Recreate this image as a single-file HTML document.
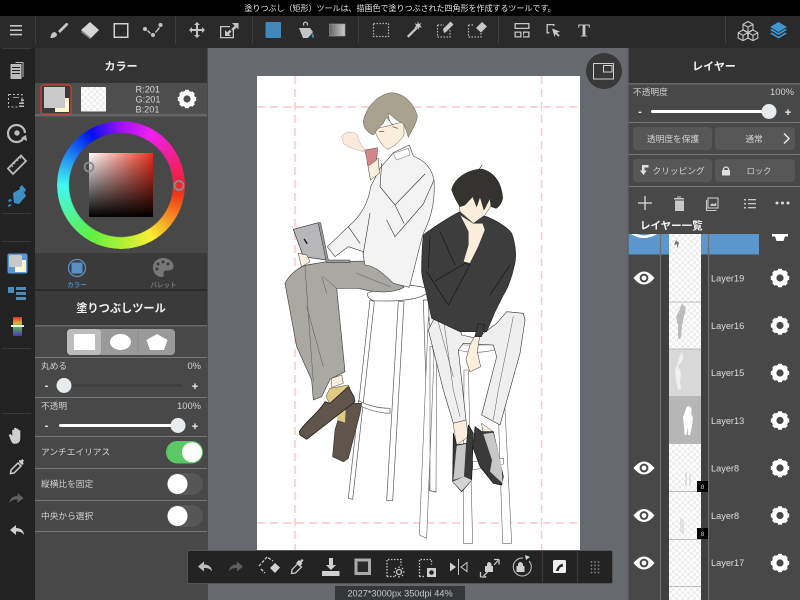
<!DOCTYPE html>
<html lang="ja"><head><meta charset="utf-8"><title>Paint</title>
<style>
html,body{margin:0;padding:0;width:800px;height:600px;overflow:hidden;background:#66696e}
svg{position:absolute;left:0;top:0;display:block}
text{font-family:"Liberation Sans","Noto Sans CJK JP",sans-serif;fill:#d2d2d2;font-size:8.7px}
.h{font-size:11px;font-weight:700;fill:#f0f0f0;text-anchor:middle}
.r{text-anchor:end;font-size:9.4px}.m{text-anchor:middle}
.l{font-size:9.2px;fill:#ddd}
.s{font-size:11px;font-weight:700;fill:#eee;text-anchor:middle}
.c{font-size:9.2px}
#wheel{position:absolute;left:57px;top:121px;width:128px;height:128px;border-radius:50%;
background:conic-gradient(from 0deg,#a010f5,#f020f0 30deg,#f02040 85deg,#f03818 100deg,#f8f030 150deg,#60f040 210deg,#40f8f0 270deg,#0010f0 330deg,#a010f5);
-webkit-mask:radial-gradient(circle,transparent 51.5px,#000 52.5px);mask:radial-gradient(circle,transparent 51.5px,#000 52.5px)}
#sv{position:absolute;left:89px;top:153px;width:64px;height:64px;background:linear-gradient(to bottom,rgba(0,0,0,0),#000),linear-gradient(to right,#fff,#e8301c)}
</style></head><body>
<svg width="800" height="600" viewBox="0 0 800 600" xmlns="http://www.w3.org/2000/svg">
<defs>
<pattern id="ck" width="6" height="6" patternUnits="userSpaceOnUse"><rect width="6" height="6" fill="#fff"/><rect width="3" height="3" fill="#eee"/><rect x="3" y="3" width="3" height="3" fill="#eee"/></pattern>
<g id="gear"><circle r="5.900" fill="none" stroke="#fff" stroke-width="4.600"/><g fill="#fff"><rect x="-2" y="-9.200" width="4" height="4"/><rect x="-2" y="-9.200" width="4" height="4" transform="rotate(45)"/><rect x="-2" y="-9.200" width="4" height="4" transform="rotate(90)"/><rect x="-2" y="-9.200" width="4" height="4" transform="rotate(135)"/><rect x="-2" y="-9.200" width="4" height="4" transform="rotate(180)"/><rect x="-2" y="-9.200" width="4" height="4" transform="rotate(225)"/><rect x="-2" y="-9.200" width="4" height="4" transform="rotate(270)"/><rect x="-2" y="-9.200" width="4" height="4" transform="rotate(315)"/></g></g>
<g id="eye"><path d="M-10.500 0Q0-13 10.500 0 0 13-10.500 0Z" fill="#fff"/><circle r="4.400" fill="#484848"/><circle r="2.400" fill="#fff"/></g>
<path id="undo" d="M-7 0L-1-5V-2C4-2 7 1 7 5 5 2 3 1.500-1 1.500V5Z"/>
</defs>

<rect width="800" height="600" fill="#66696e"/>
<rect x="0" y="0" width="800" height="16" fill="#000"/>
<rect x="0" y="16" width="800" height="32" fill="#2a2a2a"/>
<rect x="0" y="48" width="35" height="552" fill="#222"/>

<rect x="257" y="76" width="323" height="480" fill="#fff"/>
<g stroke="#fcc9c9" stroke-width="1.500" stroke-dasharray="8 5" fill="none">
<path d="M295 76V550M541.500 76V550M257 107H580M257 523H580"/>
</g>

<!-- figure 1 -->
<g transform="translate(280 80) scale(.33333)" stroke-linejoin="round" stroke-linecap="round">
<g fill="#fff" stroke="#555" stroke-width="2">
<path d="M270 660L205 1255 218 1258 283 665ZM355 665L320 1262 338 1262 372 665ZM430 660L448 1232 468 1236 445 660Z"/>
<path d="M235 962Q280 985 330 985V1000Q280 998 235 975Z"/>
<path d="M262 640Q350 600 442 625V640Q400 668 280 662 262 655 262 640Z"/>
</g>
<path d="M15 610C30 580 60 560 80 555L140 545 285 543C320 560 350 600 372 622 340 640 290 640 235 625L170 625 195 875 150 898 125 950 100 960 95 900 50 800Z" fill="#a9a8a3" stroke="#444" stroke-width="2"/>
<path d="M75 560L92 800 100 905M130 590L170 625M80 680L130 860M125 590L140 640M230 580L330 620" fill="none" stroke="#555" stroke-width="1.500"/>
<path d="M155 895L185 885 190 910 155 922Z" fill="#fbefdc" stroke="#444" stroke-width="1.500"/>
<path d="M190 970H245L240 1000 205 1135 190 1145 158 1130 165 1050Z" fill="#5f554a" stroke="#333" stroke-width="2"/>
<path d="M170 995L197 990 195 1028 172 1020Z" fill="#e0cb85"/>
<path d="M150 925L205 915 210 925 150 972 138 950Z" fill="#e0cb85" stroke="#444" stroke-width="1.500"/>
<path d="M58 1055C75 1025 115 1000 135 965L150 970 205 920 222 950 225 965 80 1078 60 1065Z" fill="#5f554a" stroke="#222" stroke-width="2.500"/>
<path d="M340 218L388 195 400 228C430 240 455 262 462 300 465 350 460 400 430 460 415 510 405 560 388 622L340 610C310 580 280 555 255 555 250 530 248 520 250 515L205 500 165 530 142 500 205 440C240 410 265 370 272 320L300 265Z" fill="#f3f3f3" stroke="#444" stroke-width="1.800"/>
<path d="M305 250L300 320 345 375 435 282M345 375L372 430M345 470L430 372 462 300M320 420L345 470M205 440L240 490M270 400L250 520" fill="none" stroke="#333" stroke-width="1.800"/>
<path d="M340 220L385 205 390 225 350 240Z" fill="#fff" stroke="#666" stroke-width="1.500"/>
<path d="M262 245L295 235 298 280 272 300Z" fill="#fbefdc" stroke="#333" stroke-width="1.500"/>
<path d="M255 210L293 203 290 240 265 258Z" fill="#d4858c" stroke="#555" stroke-width="1.500"/>
<path d="M185 170Q205 145 232 165 238 190 252 205V215Q215 208 192 192Z" fill="#fbeadb" stroke="#aaa" stroke-width="1.500"/>
<path d="M282 148L372 125 372 165C360 185 335 205 322 208 305 195 295 180 282 148Z" fill="#fbefdc" stroke="#555" stroke-width="1.500"/>
<path d="M250 125C255 90 285 45 335 38 375 40 405 75 412 110 410 130 395 150 385 172 378 150 375 135 365 128 345 120 335 105 325 100 325 115 330 130 340 135L318 112 310 130 295 145 280 165C265 160 250 145 250 125Z" fill="#a9a28e" stroke="#555" stroke-width="1.500"/>
<path d="M298 155h14M338 140l15 5" stroke="#444" stroke-width="2"/>
<path d="M40 448L115 428 140 540 70 530Z" fill="#b7b7ba" stroke="#333" stroke-width="2"/>
<path d="M115 428L122 428 145 540H210V548H140Z" fill="#999" stroke="#333" stroke-width="1.500"/>
<path d="M73 478l8 12" stroke="#111" stroke-width="4"/>
<path d="M55 520L80 525 90 545 65 560Z" fill="#fbefdc" stroke="#333" stroke-width="1.500"/>
</g>

<!-- figure 2 legs -->
<g transform="translate(280 280) scale(.33333)" stroke-linejoin="round" stroke-linecap="round">
<g fill="#fff" stroke="#666" stroke-width="1.800">
<path d="M445 110L418 765 440 775 462 230ZM450 200L450 632 468 635 470 200Z"/>
<path d="M552 270L550 790H578L565 270ZM650 250L668 790H695L668 250Z"/>
<path d="M578 545L670 535V552L578 570Z"/>
<path d="M535 195L650 195V208Q590 225 535 210Z"/>
</g>
<path d="M445 150L470 100 530 110 545 165 590 175 650 130 680 95 730 100 735 120 720 220 660 435 605 405 650 230 640 195 550 190 535 210 558 420 520 430 490 330 465 230Z" fill="#efefef" stroke="#333" stroke-width="1.800"/>
<path d="M488 100L520 330 540 410M700 110L655 330 640 420M470 110L520 290" fill="none" stroke="#555" stroke-width="1.500"/>
<path d="M570 195L605 130 592 215 602 260 570 276 558 240Z" fill="#fbefdc" stroke="#333" stroke-width="1.500"/>
<path d="M520 430L558 420 565 470 530 495Z M605 430L640 455 610 462Z" fill="#fbefdc" stroke="#444" stroke-width="1.500"/>
<path d="M520 460L530 495 560 490 565 435 580 460 575 600 545 635 518 605Z" fill="#3a3a3a" stroke="#111" stroke-width="2"/>
<path d="M530 497L558 492 552 590 520 600Z" fill="#c8c8c8"/><path d="M518 605L552 590 575 600 545 633Z" fill="#d5d5d5"/>
<path d="M585 440L605 455 640 455 670 590 665 615 640 610 600 560 580 505Z" fill="#3a3a3a" stroke="#111" stroke-width="2"/>
<path d="M610 462L640 458 665 560 668 610 630 575 636 540Z" fill="#c8c8c8"/>
</g>
<!-- figure 2 upper -->
<g transform="translate(410 155) scale(.33333)" stroke-linejoin="round" stroke-linecap="round">
<path d="M40 240C60 225 110 190 150 170L230 185C265 200 290 215 305 235 318 270 320 310 312 335 305 370 290 405 280 420L255 470 230 530 150 530 65 490 50 420C45 395 32 360 35 340 35 300 38 260 40 240Z" fill="#3d3d3d" stroke="#222" stroke-width="2"/>
<path d="M145 130L150 170 190 205 225 180 245 150 240 110 170 100Z" fill="#fbefdc" stroke="#444" stroke-width="1.500"/>
<path d="M150 180L175 230 175 270 160 320 180 325 205 275 225 225 218 205 190 205Z" fill="#fbefdc" stroke="#333" stroke-width="1.500"/>
<path d="M125 105C130 75 165 45 215 42 250 50 275 80 278 130 275 145 265 158 258 160L243 155 240 130 222 165 210 125 200 155 188 125 165 150 150 155C140 140 132 125 125 105Z" fill="#35332f" stroke="#222" stroke-width="1.500"/>
<path d="M208 42l8-12" stroke="#222" stroke-width="2"/>
<path d="M75 378L165 325 180 330 150 385 115 450 50 350M240 420L300 330M60 240L55 340M90 230L135 330" fill="none" stroke="#111" stroke-width="1.800"/>
<path d="M205 505L225 510 215 545 195 545Z" fill="#3d3d3d" stroke="#111" stroke-width="1.500"/>
</g>

<circle cx="604" cy="71" r="18" fill="#383838"/>
<g fill="none" stroke="#cfcfcf" stroke-width="1"><rect x="593.500" y="63.500" width="20" height="15.500"/><rect x="603.500" y="65.500" width="8.500" height="6.500"/></g>

<text x="400" y="11" class="m" style="font-size:8px;fill:#e4e4e4">塗りつぶし（矩形）ツールは、描画色で塗りつぶされた四角形を作成するツールです。</text>

<g stroke="#3e3e3e" stroke-width="1"><path d="M35.500 16V44M175.500 16V44M252.500 16V44M358.500 16V44M498.500 16V44M725.500 16V44"/></g>
<path d="M2 48.500H31" stroke="#3a3a3a"/>
<g fill="#c4c4c4" stroke="none">
<path d="M10 25h12v1.600H10zM10 29.400h12v1.600H10zM10 33.800h12v1.600H10z"/>
<path d="M66 23l-8 8 2 2 8-8q1-2-2-2z"/><path d="M50 38q1-1 1-3 1-3 4-3l2 2q0 4-7 4z"/>
<path d="M90 22L99 30 91 38 81 30Z" fill="#d5d5d5"/>
<path d="M82 31l9 7-1 1-9-7z" fill="#888"/>
<path d="M113.500 23h15v15h-15z M115 24.500v12h12v-12z" fill-rule="evenodd" fill="#d0d0d0"/>
<circle cx="145" cy="29" r="2"/><circle cx="153" cy="35" r="2"/><circle cx="160.500" cy="25" r="2"/><path d="M148 30l3 3-1 1-3-3zM155 32l4-5 1 1-4 5z"/>
<path d="M197 22l3 3h-2v4h4v-2l3 3-3 3v-2h-4v4h2l-3 3-3-3h2v-4h-4v2l-3-3 3-3v2h4v-4h-2z"/>
<path d="M220 26h10v1.300h-8.700v9.700h11.400v-7h1.300v8.300H220z"/>
<path d="M232 23h6.500v6.500l-2-2-3.500 3.500-1.800-1.800 3.500-3.500z"/>
<path d="M225 30v6h6l-2-2 2.500-2.500-1.800-1.800-2.500 2.500z"/>
<rect x="265.500" y="22" width="15.500" height="16" rx="1" fill="#4187ba"/>
<path d="M303 23q2.500-3 5 0v2.500h-1.200v-2q-1.300-1.500-2.600 0v2H303z"/><path d="M299 28h11l3 4-5 6h-5z"/><path d="M312 33q3 2 1.500 5-2.500 0-1.500-5z" fill="#4187ba"/>
</g>
<defs><linearGradient id="gg" x1="0" x2="1"><stop offset="0" stop-color="#666"/><stop offset="1" stop-color="#ccc"/></linearGradient></defs>
<rect x="329.500" y="24" width="15.500" height="12" fill="url(#gg)" stroke="#999" stroke-width=".6"/>
<g fill="none" stroke="#b5b5b5" stroke-width="1.200" stroke-dasharray="1.500 1.500">
<rect x="373.500" y="23.500" width="15" height="13"/>
<path d="M437.500 25V37H450V30"/><path d="M468.500 25V37H481V31M468.500 25H474"/>
<path d="M437.500 25H444"/>
</g>
<g fill="#c8c8c8">
<path d="M407 36l9-9 1.600 1.600-9 9z"/><path d="M418 21l.8 3 2.700-1-1.500 2.500 2 2-3-.3-.5 2.800-1.500-2.800-2.800.5 2-2-1.500-2.500 2.600 1z"/>
<path d="M444 33l-1-4 7.500-7.500 3 3-7.500 7.500z"/>
<path d="M476 28l6-6 5 4.500-6 6z"/>
<path d="M514.500 23h15v6h-15z M515.800 24.300v3.400h12.400v-3.400z M514.500 31.500h7v6h-7z M515.800 32.800v3.400h4.400v-3.400z M523 31.500h6.500v6H523z M524.300 32.800l-1 3.400h4.900v-3.400z" fill-rule="evenodd"/>
<path d="M546.500 24h8v2h-1.300v-.8h-5.400v7h1.700v1.300h-3z"/><path d="M552 28.500l8 3-3 1.200 2.700 2.800-1.300 1.300-2.800-2.800-1 3z"/>
</g>
<text x="584" y="36.500" class="m" style="font-family:'Liberation Serif',serif;font-size:18px;font-weight:700;fill:#c8c8c8">T</text>
<g fill="none" stroke="#c8c8c8" stroke-width="1.100" stroke-linejoin="round">
<path d="M748 21.500l5 2.800v5.400l-5 2.800-5-2.800v-5.400zM743 24.300l5 2.800 5-2.800M748 27.100v5.400"/>
<path d="M743 30l4.800 2.700v5.400l-4.800 2.500-4.800-2.500v-5.400zM738.200 32.700l4.800 2.700 4.800-2.700M743 35.400v5"/>
<path d="M753 30l4.800 2.700v5.400l-4.800 2.500-4.800-2.500v-5.400zM748.200 32.700l4.800 2.700 4.800-2.700M753 35.400v5"/>
</g>
<g fill="#3f95cf" transform="translate(-8 0)">
<path d="M786.500 22l8.500 5-8.500 5-8.500-5z"/>
<path d="M778 30l1.800-1 6.700 4 6.700-4 1.800 1-8.500 5z"/>
<path d="M778 33.500l1.800-1 6.700 4 6.700-4 1.800 1-8.500 5z"/>
</g>

<!-- left panel -->
<rect x="35" y="48" width="173" height="552" fill="#484848"/>
<rect x="35" y="48" width="172" height="35" fill="#333"/>
<text x="121" y="70" class="h">カラー</text>
<rect x="35" y="83" width="172" height="32" fill="#4e4e4e"/>
<rect x="35" y="114" width="172" height="2.500" fill="#666"/>
<rect x="41" y="85" width="30" height="29" rx="2.500" fill="#3a3a3a" stroke="#e03c30" stroke-width="1.200"/>
<rect x="55" y="98" width="14" height="14" fill="#fdf6d3"/>
<rect x="44" y="87" width="21" height="21" fill="#c9c9c9"/>
<rect x="81" y="87" width="25" height="24.500" fill="url(#ck)"/>
<text x="135.500" y="92.500" class="c">R:201</text><text x="135.500" y="102.500" class="c">G:201</text><text x="135.500" y="112.500" class="c">B:201</text>
<use href="#gear" x="187" y="99"/>

<rect x="35" y="253" width="172" height="36" fill="#3a3a3a"/>
<circle cx="77" cy="268" r="8.500" fill="none" stroke="#5a8fc2" stroke-width="1.300"/>
<rect x="71.500" y="262.500" width="11" height="11" rx="1.500" fill="#5a8fc2"/>
<text x="77" y="287" class="m" style="font-size:6.500px;font-weight:700;fill:#4f86ba">カラー</text>
<path d="M163 258c-6 0-10 4.500-10 9.500 0 5 3.500 9.500 8.500 9.500 3 0 2.500-2.500 2-4 0-2 1.500-2.500 3.500-2.500 4 0 6.500-1 6.500-4 0-5-5-8.500-10.500-8.500z" fill="#777"/>
<g fill="#3a3a3a"><circle cx="158" cy="264" r="1.500"/><circle cx="163" cy="262" r="1.500"/><circle cx="168" cy="264" r="1.500"/><circle cx="157" cy="269" r="1.500"/></g>
<text x="163.500" y="287" class="m" style="font-size:6.500px;font-weight:700;fill:#777">パレット</text>

<rect x="35" y="289" width="172" height="2" fill="#2a2a2a"/>
<rect x="35" y="291" width="172" height="34" fill="#3a3a3a"/>
<text x="121" y="312" class="h" style="font-size:11.200px">塗りつぶしツール</text>
<rect x="35" y="325" width="172" height="1.500" fill="#666"/>

<rect x="67" y="329" width="108" height="26" rx="4" fill="#9a9a9a"/>
<rect x="67" y="329" width="34" height="26" rx="4" fill="#bcbcbc"/>
<path d="M138 331v22" stroke="#8a8a8a"/>
<rect x="74" y="334" width="21" height="16" fill="#fff"/>
<ellipse cx="120.500" cy="342" rx="10.500" ry="8" fill="#fff"/>
<path d="M157 334l10.500 6-3.500 10h-14l-3.500-10z" fill="#fff"/>

<g stroke="#777" stroke-width="1"><path d="M35 357.500H207M35 397.500H207M35 436.500H207M35 468.500H207M35 500.500H207M35 531.500H207"/></g>
<text x="41" y="369">丸める</text><text x="201" y="369" class="r">0%</text>
<rect x="64" y="384" width="118" height="3" rx="1.500" fill="#3e3e3e"/>
<circle cx="64" cy="385.500" r="7.500" fill="#e8ecee"/>
<text x="46.500" y="389" class="s">-</text><text x="195" y="390" class="s">+</text>
<text x="41" y="409">不透明</text><text x="201" y="409" class="r">100%</text>
<rect x="59" y="424" width="119" height="3" rx="1.500" fill="#fff"/>
<circle cx="178" cy="425.500" r="7.500" fill="#e8ecee"/>
<text x="46.500" y="429" class="s">-</text><text x="195" y="430" class="s">+</text>
<text x="41" y="455">アンチエイリアス</text>
<rect x="166" y="441" width="37" height="22.500" rx="11.250" fill="#5ac864"/><circle cx="192" cy="452.300" r="10" fill="#fff"/>
<text x="41" y="487">縦横比を固定</text>
<rect x="167" y="473" width="36" height="22" rx="11" fill="#565656"/><circle cx="177.500" cy="484" r="10" fill="#fff"/>
<text x="41" y="519">中央から選択</text>
<rect x="167" y="505" width="36" height="22" rx="11" fill="#565656"/><circle cx="177.500" cy="516" r="10" fill="#fff"/>

<!-- left rail -->
<g stroke="#383838" stroke-width="1"><path d="M2 213.500H31M2 241.500H31M2 348.500H31M2 413.500H31"/></g>
<g fill="#bcbcbc">
<path d="M10.500 64h11v15h-11z M12 67h8v1h-8zM12 70h8v1h-8zM12 73h8v1h-8z" fill-rule="evenodd"/><path d="M22.500 63v14h1V62h-8v1z"/>
<path d="M13 98h6v-.8h-6zM21 101h3v-1.500h-3zM19 104h5v-1.500h-5zM19 107h5v-1.500h-5z"/>
<path d="M9 94.500h13v8" fill="none" stroke="#bcbcbc" stroke-dasharray="2 2"/><path d="M8.500 94v13h9" fill="none" stroke="#bcbcbc" stroke-dasharray="2 2"/>
<path d="M23 139a8.500 8.500 0 1 1 2-6" fill="none" stroke="#bcbcbc" stroke-width="2.200"/><circle cx="17" cy="133" r="2.700"/><path d="M21 138l6 3-1-6z"/>
<path d="M8 169.500L21 156.500 26 162 13 175Z" fill="none" stroke="#bcbcbc" stroke-width="1.800" transform="translate(0 -1)"/>
<path d="M13 162l2 2M16 159l2 2M19 156.500l2 2M11 165l2 2" stroke="#bcbcbc" stroke-width="1"/>
</g>
<g fill="#3d8fc4">
<path d="M13 193l9-5 4 8-7 8-5-1z"/><path d="M8 200l3-1 1 2-3 1zM8 205l2.500-1 1 1.500-3 1.500z"/><path d="M19 188l3-3 4 5-1 2z"/>
</g>
<rect x="7.500" y="253.500" width="20" height="20" rx="2" fill="#5d97d0"/>
<rect x="15" y="260" width="11" height="12" fill="#fdf6d3"/><rect x="9" y="255" width="13" height="12" rx="1.500" fill="#c9c9c9"/>
<g fill="#4b8cbb"><rect x="8" y="287" width="6" height="6"/><rect x="16" y="287" width="10" height="3"/><rect x="16" y="292" width="10" height="3"/><rect x="16" y="297" width="10" height="3"/></g>
<defs><linearGradient id="rb" x1="0" x2="0" y1="0" y2="1"><stop offset="0" stop-color="#d83030"/><stop offset=".3" stop-color="#e0b030"/><stop offset=".55" stop-color="#50b050"/><stop offset="1" stop-color="#5030c0"/></linearGradient></defs>
<rect x="13" y="317" width="9" height="19" fill="url(#rb)"/><rect x="11" y="325" width="13" height="2" fill="#eee"/>
<g fill="#cfcfcf">
<path d="M10 437l-1-2 1.500-.5 2 2v-6.500h1.500v5h.5v-6.800h1.500v6.800h.5v-6h1.500v6.500h.5v-5h1.500v7.500q0 5-4 5.500h-2q-2 0-4-6z" stroke="#cfcfcf" stroke-width=".6"/>
<path d="M11 473l7-7 3 3-7 7-3.500.5z" fill="none" stroke="#cfcfcf" stroke-width="1.500" transform="translate(0 -3)"/><path d="M19 462l3 3 1.500-1-.5-2 1-1.500-2-1.500-1 1.500-2-.5z"/>
</g>
<use href="#undo" x="16.500" y="498" fill="#5f5f5f" transform="matrix(-1 0 0 1 33 0)"/>
<use href="#undo" x="17" y="530" fill="#cfcfcf"/>

<!-- right panel -->
<rect x="628" y="48" width="172" height="552" fill="#484848"/>
<rect x="628" y="48" width="172" height="35" fill="#333"/>
<rect x="628" y="83" width="172" height="1.500" fill="#666"/>
<text x="714" y="70" class="h">レイヤー</text>
<text x="633" y="95">不透明度</text><text x="794" y="95" class="r">100%</text>
<rect x="651" y="110" width="118" height="3" rx="1.500" fill="#fff"/><circle cx="769" cy="111.500" r="7.500" fill="#e8ecee"/>
<text x="640" y="115" class="s">-</text><text x="788" y="116" class="s">+</text>
<g stroke="#777"><path d="M628 122.500H800M628 154.500H800M628 186.500H800"/></g>
<g fill="#575757"><rect x="633" y="127" width="79" height="23" rx="4"/><rect x="715" y="127" width="80" height="23" rx="4"/><rect x="633" y="159" width="79" height="23" rx="4"/><rect x="715" y="159" width="80" height="23" rx="4"/></g>
<text x="673" y="142" class="m">透明度を保護</text><text x="754" y="142" class="m">通常</text>
<path d="M784 133.500l5 5-5 5" fill="none" stroke="#e8e8e8" stroke-width="1.500"/>
<text x="678.500" y="174" class="m">クリッピング</text><text x="759" y="174" class="m" style="font-size:8.300px">ロック</text>
<path d="M642 165h6.500v2.500h-4v3h2.200l-3.200 4.500-3.500-4.500h2z" fill="#e0e0e0"/>
<rect x="722" y="170" width="8" height="5.500" rx=".5" fill="#e0e0e0"/><path d="M723.500 170.500v-2q2.500-3 5 0v2" fill="none" stroke="#e0e0e0" stroke-width="1.200"/>
<path d="M645 196v14M638 203h14" stroke="#ddd" stroke-width="1.300"/>
<path d="M675 198h10v1.500h-10zM676 200.500h9v10.500h-9zM678 196.500h4v1h-4z" fill="#c8c8c8" transform="translate(-1 0)"/>
<g fill="none" stroke="#c8c8c8" stroke-width="1.100"><rect x="708" y="198" width="10" height="10"/><path d="M706.500 200v10.500h10"/></g>
<path d="M710 206l2-3 2 1.500 2-2 .5 3.500z" fill="#c8c8c8"/>
<g fill="#c8c8c8"><rect x="744" y="199" width="2" height="1.500"/><rect x="748" y="199" width="8" height="1.300"/><rect x="744" y="203" width="2" height="1.500"/><rect x="748" y="203" width="8" height="1.300"/><rect x="744" y="207" width="2" height="1.500"/><rect x="748" y="207" width="8" height="1.300"/></g>
<g fill="#ddd"><circle cx="777" cy="203" r="1.500"/><circle cx="782.500" cy="203" r="1.500"/><circle cx="788" cy="203" r="1.500"/></g>
<text x="640" y="229" style="font-size:10.500px;font-weight:700;fill:#f4f4f4">レイヤー一覧</text>

<svg x="628" y="234" width="172" height="366" viewBox="628 234 172 366">
<rect x="628" y="234" width="131" height="20.500" fill="#5b96cc"/>
<path d="M631 234q13 8 26 0" fill="#fff"/><path d="M637 234q7 3 14 0" fill="#5b96cc"/>
<rect x="772" y="234" width="16" height="2.500" fill="#fff"/><path d="M775 236h10l-1.500 5h-7z" fill="#fff"/>
<rect x="661" y="254.500" width="8" height="346" fill="#404040"/>
<rect x="701" y="254.500" width="8" height="346" fill="#404040"/>
<rect x="669" y="234" width="32" height="366" fill="url(#ck)"/>
<path d="M676 240l-2 5 3-1 0 5 2-6-1-1z" fill="#777"/>
<rect x="669" y="349" width="32" height="47" fill="#d8d8d8"/>
<rect x="669" y="396" width="32" height="48" fill="#b6b6b6"/>
<path d="M682 304q6 3 2 12l-2 10-1 12-3 1 0-14-2-8 3-6z" fill="#bcbcbc"/>
<path d="M681 352q4 3 1 9l-4 5 3 7-1 9 1 7-3 1-2-10-1-10 3-8z" fill="#f0f0f0"/>
<path d="M689 406q4 2 2 7l2 5-1 8-2 9-2 0-.500-8-1 8-2 0-.500-9-1-9 2-5q1-6 4-6z" fill="#fff"/>
<path d="M686 472v14M690 474v12M683 520v14M681 518v14" stroke="#ccc" fill="none"/>
<g stroke="#aaa" stroke-width=".8"><path d="M669 302h32M669 349h32M669 491.500h32M669 539.500h32M669 586.500h32"/></g>
<g stroke="#6f6f6f" stroke-width="1.200"><path d="M660.500 234V600M708.500 234V600"/></g>
<g fill="#000"><rect x="697" y="481" width="11" height="11"/><rect x="697" y="528" width="11" height="11"/></g>
<text x="702.500" y="489" class="m" style="font-size:6px;fill:#ddd">8</text><text x="702.500" y="536" class="m" style="font-size:6px;fill:#ddd">8</text>
<g><text class="l" x="711" y="281.500">Layer19</text><text class="l" x="711" y="329">Layer16</text><text class="l" x="711" y="376">Layer15</text><text class="l" x="711" y="424">Layer13</text><text class="l" x="711" y="471.500">Layer8</text><text class="l" x="711" y="519">Layer8</text><text class="l" x="711" y="566">Layer17</text></g>
<use href="#eye" x="644" y="278"/><use href="#eye" x="644" y="468"/><use href="#eye" x="644" y="515.500"/><use href="#eye" x="644" y="563"/>
<use href="#gear" x="780" y="278"/><use href="#gear" x="780" y="325.500"/><use href="#gear" x="780" y="373"/><use href="#gear" x="780" y="420.500"/><use href="#gear" x="780" y="468"/><use href="#gear" x="780" y="515.500"/><use href="#gear" x="780" y="563"/>
</svg>
<path d="M628 48V600" stroke="#5e6064" stroke-width="1.500"/>

<!-- bottom toolbar -->
<rect x="187.500" y="550.500" width="425" height="33" rx="2" fill="#232323" stroke="#555"/>
<g stroke="#3c3c3c"><path d="M542.500 551V583M577.500 551V583"/></g>
<use href="#undo" x="205" y="566.500" fill="#bdbdbd"/>
<use href="#undo" x="-236" y="566.500" fill="#5f5f5f" transform="scale(-1 1)"/>
<rect x="354.500" y="558.500" width="16.500" height="16.500" fill="#aaa"/>
<rect x="357.500" y="561.500" width="10.500" height="10.500" fill="#2a2a2a"/>
<g fill="none" stroke="#c8c8c8" stroke-width="1.300">
<path d="M259 566l8-9 6 4M261 569l4 4" stroke-dasharray="3 1.500"/>
<path d="M291.500 573.500l.5-4 6-6 3.500 3.500-6 6z"/>
<path d="M387 576.500v-17h14v6M387 576.500h8" stroke-dasharray="1.500 1.500"/>
<path d="M419.500 576.500v-17h12v5M419.500 576.500h5" stroke-dasharray="1.500 1.500"/>
<circle cx="399" cy="572" r="2.500"/>
<path d="M399 566.500v1.500M399 576v1.500M393.500 572h1.500M403 572h1.500M395 568l1 1M402 575l1 1M395 576l1-1M402 569l1-1"/>
<path d="M467 562.500l-6 4.500 6 4.500zM458.500 559v16" stroke-width="1"/>
<path d="M483.500 576l5-5M494 565l4-4.500M480.500 577h5v-1M480.500 577v-5M499 559.500h-5M499 559.500v5"/>
<path d="M529 561a9 9 0 1 1-6-3" stroke="#c8c8c8" stroke-width="1"/>
</g>
<g fill="#d0d0d0">
<path d="M270 568l5-5 5 4.500-5 5.500z"/>
<path d="M296 563l3-3 1 1 2-2 1.500 1.500-2 2 1 1-3 3z"/>
<path d="M329 558h4v7h3l-5 5-5-5h3z"/><rect x="322" y="571" width="17.500" height="5"/>
<path d="M450 562.500l6 4.500-6 4.500z"/>
<rect x="427" y="568" width="9" height="9"/><circle cx="431.500" cy="572.500" r="2.300" fill="#232323"/>
<path d="M487 566v-2q2-4 4.500 0v2h1.500v6h-8v-6z"/>
<path d="M518 566v-2q2.200-4 5 0v2h1.500v6h-8v-6z"/>
<path d="M525 555l5 2-4 3z"/>
<rect x="553" y="560" width="13" height="13" rx="1.500" fill="#eee"/>
</g>
<path d="M556 571c1-4 3-6 6.500-7.500l.5 3-3 1-1.500 3.500z" fill="#222"/>
<g fill="#888"><circle cx="591.500" cy="562" r=".9"/><circle cx="595" cy="562" r=".9"/><circle cx="598.500" cy="562" r=".9"/><circle cx="591.500" cy="565.500" r=".9"/><circle cx="595" cy="565.500" r=".9"/><circle cx="598.500" cy="565.500" r=".9"/><circle cx="591.500" cy="569" r=".9"/><circle cx="595" cy="569" r=".9"/><circle cx="598.500" cy="569" r=".9"/><circle cx="591.500" cy="572.500" r=".9"/><circle cx="595" cy="572.500" r=".9"/><circle cx="598.500" cy="572.500" r=".9"/></g>
<path d="M335 586h130v14H335z" fill="#34363a"/>
<text x="400" y="596.500" class="m" style="font-size:9.200px;fill:#c8c8c8">2027*3000px 350dpi 44%</text>
</svg>
<div id="wheel"></div>
<div id="sv"></div>
<svg width="800" height="600" viewBox="0 0 800 600" style="pointer-events:none">
<g fill="none" stroke="#8a8a8a" stroke-width="1.800"><circle cx="89" cy="167" r="4.500"/><circle cx="179" cy="185.500" r="4.500"/></g>
</svg>
</body></html>
